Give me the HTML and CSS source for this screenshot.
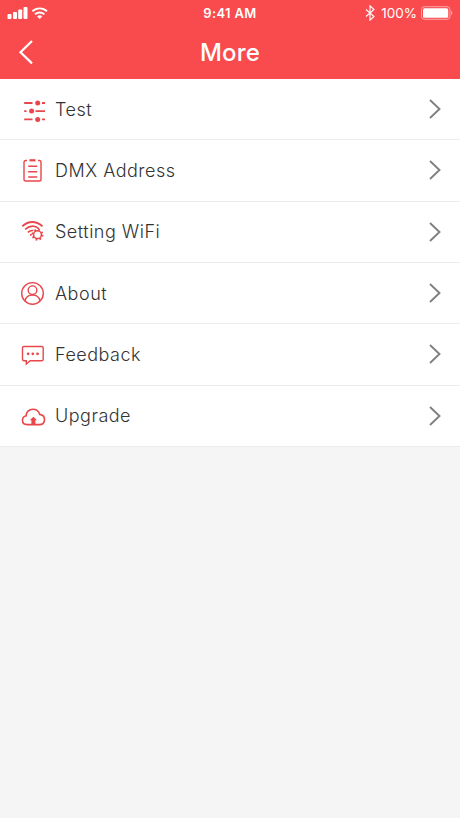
FILE: index.html
```html
<!DOCTYPE html>
<html lang="en">
<head>
  <meta charset="UTF-8">
  <meta name="viewport" content="width=device-width, initial-scale=1.0">
  <title>More</title>
  <link rel="stylesheet" href="styles.css">
</head>
<body>
  <header class="header">
    <div class="status-bar">
      <div class="status-left">
        <svg width="42" height="16" viewBox="0 0 42 16" fill="#fff">
          <rect x="0.5" y="9" width="4" height="5" rx="1"/>
          <rect x="6" y="7" width="4" height="7" rx="1"/>
          <rect x="11.2" y="4.5" width="4" height="9.5" rx="1"/>
          <rect x="16.5" y="2" width="4" height="12" rx="1"/>
          <g fill="none" stroke="#fff" stroke-width="1.9">
            <path d="M25.4 6.3a10.5 10.5 0 0 1 14.6 0"/>
            <path d="M28 9.4a6.6 6.6 0 0 1 9.4 0"/>
          </g>
          <path d="M32.7 14l-2.6-2.6a3.8 3.8 0 0 1 5.2 0z"/>
        </svg>
      </div>
      <div class="status-time">9:41 AM</div>
      <div class="status-right">
        <svg width="10" height="16" viewBox="0 0 10 16" fill="none" stroke="#fff" stroke-width="1.1">
          <path d="M1 4.5l8 7-4 3.7V.8l4 3.7-8 7"/>
        </svg>
        <span class="battery-text">100%</span>
        <svg width="33" height="16" viewBox="0 0 33 16">
          <rect x="1.5" y="1.7" width="28.5" height="12.6" rx="3" fill="none" stroke="#fff" stroke-opacity=".5"/>
          <rect x="3" y="3.3" width="25.2" height="9.4" rx="1.5" fill="#fff"/>
          <path d="M31.3 5.8q2.2 2.2 0 4.4z" fill="#fff" fill-opacity=".6"/>
        </svg>
      </div>
    </div>
    <div class="nav-bar">
      <svg class="back" width="16" height="26" viewBox="0 0 16 26" fill="none" stroke="#fff" stroke-width="2.2">
        <path d="M14 2L2.5 13.2 14 24.4"/>
      </svg>
      <h1>More</h1>
    </div>
  </header>

  <ul class="menu">
    <li class="menu-item">
      <svg class="icon" viewBox="0 0 26 26">
        <path d="M4.2 7h8.3M22 7h3M4.2 15.1h2.3M15.5 15.1H25M4.2 23.4h8.3M22 23.4h3" stroke-width="1.8"/>
        <g class="solid">
          <circle cx="17.7" cy="7" r="2.5"/>
          <circle cx="11.6" cy="15.1" r="2.5"/>
          <circle cx="17.7" cy="23.4" r="2.5"/>
        </g>
      </svg>
      <span class="label test">Test</span>
      <svg class="arrow" viewBox="0 0 14 22"><path d="M2 2l9.5 9L2 20"/></svg>
    </li>
    <li class="menu-item">
      <svg class="icon" viewBox="0 0 26 26">
        <path d="M7 3.5H5.8Q4 3.5 4 5.3v16.9Q4 24 5.8 24h13.4q1.8 0 1.8-1.8V5.3q0-1.8-1.8-1.8H18"/>
        <path d="M9.5 3.3h6" stroke-width="2.2"/>
        <path d="M8.2 9.3h9M8.2 14.8h9M8.2 20h9"/>
      </svg>
      <span class="label address">DMX Address</span>
      <svg class="arrow" viewBox="0 0 14 22"><path d="M2 2l9.5 9L2 20"/></svg>
    </li>
    <li class="menu-item">
      <svg class="icon" viewBox="0 0 26 26">
        <path d="M2.3 7.2q9.8-8.3 20.2 0" stroke-width="1.9"/>
        <path d="M5.1 10.4q7.3-6 14 -.6" stroke-width="1.7"/>
        <path d="M7.8 13.3q2.4-2.2 5.4-1.8M10 16.2l1.7-.9" stroke-width="1.6"/>
        <circle cx="17.5" cy="15.7" r="3.9" stroke-width="1.5"/>
        <circle cx="17.5" cy="15.7" r="5.1" stroke-width="1.7" stroke-dasharray="1.8 2.205"/>
      </svg>
      <span class="label wifi">Setting WiFi</span>
      <svg class="arrow" viewBox="0 0 14 22"><path d="M2 2l9.5 9L2 20"/></svg>
    </li>
    <li class="menu-item">
      <svg class="icon" viewBox="0 0 26 26">
        <circle cx="12.5" cy="13.4" r="10.8"/>
        <circle cx="12.5" cy="10.2" r="4.3"/>
        <path d="M5 21q1.2-6 7.5-6t7.5 6"/>
      </svg>
      <span class="label about">About</span>
      <svg class="arrow" viewBox="0 0 14 22"><path d="M2 2l9.5 9L2 20"/></svg>
    </li>
    <li class="menu-item">
      <svg class="icon" viewBox="0 0 26 26">
        <path d="M4 5.5h17.7q1.5 0 1.5 1.5v11.2q0 1.5-1.5 1.5H10.2L6.3 23v-3.3H4q-1.5 0-1.5-1.5V7q0-1.5 1.5-1.5z"/>
        <g class="solid">
          <circle cx="8.1" cy="12.8" r="1.4"/>
          <circle cx="12.8" cy="12.8" r="1.4"/>
          <circle cx="17.5" cy="12.8" r="1.4"/>
        </g>
      </svg>
      <span class="label feedback">Feedback</span>
      <svg class="arrow" viewBox="0 0 14 22"><path d="M2 2l9.5 9L2 20"/></svg>
    </li>
    <li class="menu-item">
      <svg class="icon" viewBox="0 0 26 26">
        <path d="M7.2 21.6C4.1 21.6 2.5 19.7 2.5 17.2c0-2.2 1.5-3.9 3.7-4.4C6 8.9 9 6.3 12.9 6.3c3.6 0 5.9 2 6.8 5.1 2.9.4 4.8 2.2 4.8 5 0 3.1-2.1 5.2-5.2 5.2z" stroke-width="1.6"/>
        <path class="solid" d="M13.4 13.7l3.6 3.5h-1.6v4.4h-4v-4.4H9.8z"/>
      </svg>
      <span class="label upgrade">Upgrade</span>
      <svg class="arrow" viewBox="0 0 14 22"><path d="M2 2l9.5 9L2 20"/></svg>
    </li>
  </ul>
</body>
</html>
```

FILE: styles.css
```css
* {
  margin: 0;
  padding: 0;
  box-sizing: border-box;
}

body {
  font-family: Inter, "Liberation Sans", sans-serif;
  background: #f5f5f5;
  color: #333;
  min-height: 100vh;
}

svg {
  display: block;
  flex: none;
}

.header {
  height: 79px;
  background: #f94b4e;
  color: #fff;
}

.status-bar {
  display: grid;
  grid-template-columns: 1fr auto 1fr;
  align-items: center;
  height: 26px;
  padding: 0 7px;
  font-size: 13px;
}

.status-left {
  padding-bottom: 1px;
}

.status-time {
  font-weight: 600;
  letter-spacing: 0.35px;
}

.status-right {
  display: flex;
  align-items: center;
  justify-content: flex-end;
}

.battery-text {
  margin: 0 3px 0 6px;
  font-size: 13.5px;
}

.nav-bar {
  display: grid;
  grid-template-columns: 16px 1fr 16px;
  align-items: center;
  height: 52px;
  padding: 0 18px;
}

.nav-bar h1 {
  text-align: center;
  font-size: 24px;
  font-weight: 500;
  letter-spacing: 0.2px;
}

.menu {
  height: 368px;
  display: grid;
  grid-template-rows: repeat(6, 1fr);
  background: #fff;
  list-style: none;
}

.menu-item {
  display: flex;
  align-items: center;
  padding: 0 18px 0 20px;
  border-bottom: 1px solid #ebebeb;
}

.icon {
  width: 26px;
  height: 26px;
  margin-right: 9px;
  fill: none;
  stroke: #e8474b;
  stroke-width: 1.4;
}

.solid,
.icon .solid {
  fill: #e8474b;
  stroke: none;
}

.label {
  flex: 1;
  font-size: 18px;
  font-weight: 300;
  letter-spacing: 0.5px;
}

.arrow {
  width: 14px;
  height: 22px;
  fill: none;
  stroke: #808080;
  stroke-width: 1.9;
}
```
